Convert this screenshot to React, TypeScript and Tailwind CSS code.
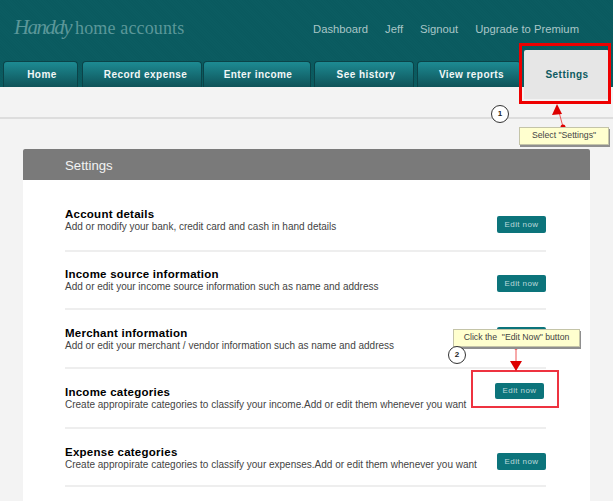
const tabs = [
  { label: "Home", cls: "w-[75px] mr-[4px] pl-[3px]" },
  { label: "Record expense", cls: "w-[120px] mr-[1px] pl-[7px]" },
  { label: "Enter income", cls: "w-[108px] mr-[3px] pl-[2px]" },
  { label: "See history", cls: "w-[100px] mr-[3px] pl-[4px]" },
  { label: "View reports", cls: "w-[104px] mr-[3px] pl-[5px]" },
];

const rows = [
  { title: "Account details", desc: "Add or modify your bank, credit card and cash in hand details", h: "h-[72px]", pt: "pt-[28px]", btn: "mt-[8px] mr-0 h-[17px]" },
  { title: "Income source information", desc: "Add or edit your income source information such as name and address", h: "h-[58px]", pt: "pt-[16px]", btn: "mt-[7px] mr-0 h-[17px]" },
  { title: "Merchant information", desc: "Add or edit your merchant / vendor information such as name and address", h: "h-[59px]", pt: "pt-[17px]", btn: "mt-0 mr-0 h-[17px]" },
  { title: "Income categories", desc: "Create appropirate categories to classify your income.Add or edit them whenever you want", h: "h-[60px]", pt: "pt-[17px]", btn: "-mt-[3px] mr-[2px] h-[16px]" },
  { title: "Expense categories", desc: "Create appropirate categories to classify your expenses.Add or edit them whenever you want", h: "h-[58px]", pt: "pt-[17px]", btn: "mt-[7px] mr-0 h-[17px]" },
];

function Tab({ label, cls }: { label: string; cls: string }) {
  return (
    <div className={`${cls} shrink-0 h-[26px] rounded-t-[4px] border border-b-0 border-[#0b4348] bg-gradient-to-b from-[#1d8b93] to-[#0f5359] flex items-center justify-center text-[#f2f7f7] text-[10px] font-bold tracking-[0.45px] whitespace-nowrap`}>
      {label}
    </div>
  );
}

function Callout({ cls, children }: { cls: string; children: React.ReactNode }) {
  return (
    <div className={`absolute ${cls} bg-[#ffffcf] border border-[#c4c4a8] shadow-[1px_2px_0_#8f8f8f] flex items-center justify-center text-[8.7px] text-[#444] whitespace-nowrap`}>
      {children}
    </div>
  );
}

function Badge({ cls, n }: { cls: string; n: string }) {
  return (
    <div className={`absolute ${cls} w-[18px] h-[18px] rounded-full border-[1.5px] border-[#333] bg-white flex items-center justify-center text-[8px] font-bold text-[#222]`}>
      {n}
    </div>
  );
}

export default function App() {
  return (
    <div className="relative w-[613px] h-[501px] overflow-hidden bg-[#f3f3f3] font-['Liberation_Sans',Arial,sans-serif]">
      <header className="h-[87px] bg-[#0a5b60] bg-[repeating-linear-gradient(45deg,#0a5a5f_0px,#0a5a5f_1px,#0b5c61_1px,#0b5c61_2px)] flex flex-col">
        <div className="h-[61px] flex items-start">
          <div className="ml-[14px] mt-[12px] flex items-baseline text-[#5b9799]">
            <span className="w-[58px] font-['Liberation_Serif',serif] italic text-[21px] leading-[30px] tracking-[-1.6px]">Handdy</span>
            <span className="ml-[3px] font-['Liberation_Serif',serif] text-[18px] leading-[30px] tracking-[0.15px]">home accounts</span>
          </div>
          <nav className="ml-auto mr-[34px] mt-[21px] flex gap-[17px] text-[11.25px] leading-[16px] text-[#a9c6c7]">
            <span>Dashboard</span>
            <span>Jeff</span>
            <span>Signout</span>
            <span>Upgrade to Premium</span>
          </nav>
        </div>
        <div className="h-[26px] pl-[3px] flex items-end">
          {tabs.map((t) => (
            <Tab key={t.label} label={t.label} cls={t.cls} />
          ))}
        </div>
      </header>

      <div className="mt-[30px] h-[2px] bg-[#dddddd]" />

      <main className="mx-[23px] mt-[30px] w-[567px] h-[352px] bg-white">
        <div className="h-[31px] rounded-t-[2px] bg-[#7a7a7a] pl-[42px] pt-[2px] flex items-center text-[13.2px] text-[#f2f2f2]">Settings</div>
        <div className="ml-[42px] w-[481px]">
          {rows.map((r) => (
            <div key={r.title} className={`${r.h} ${r.pt} flex justify-between border-b-2 border-[#eeeeee]`}>
              <div className="whitespace-nowrap">
                <div className="text-[11.5px] leading-[13px] font-bold tracking-[0.25px] text-black">{r.title}</div>
                <div className="text-[10px] leading-[11px] text-[#444]">{r.desc}</div>
              </div>
              <div className={`${r.btn} w-[49px] shrink-0 rounded-[2px] bg-[#0c747b] flex items-center justify-center text-[8px] tracking-[0.4px] text-[#bcdadc]`}>
                Edit now
              </div>
            </div>
          ))}
        </div>
      </main>

      {/* annotations */}
      <div className="absolute left-[524px] top-[50px] w-[85px] h-[49px] rounded-t-[2px] bg-[#e6e6e6] flex items-center justify-center text-[#0d5a60] text-[10px] font-bold tracking-[0.45px] pl-[1px]">
        Settings
      </div>
      <div className="absolute left-[519px] top-[43px] w-[92px] h-[61px] border-[3px] border-[#ee0000]" />
      <div className="absolute left-[471px] top-[370px] w-[88px] h-[38px] border-2 border-[#ee3340]" />
      <svg className="absolute left-0 top-0" width="613" height="501" viewBox="0 0 613 501">
        <line x1="563" y1="127" x2="559" y2="112" stroke="#ee5555" strokeWidth="1" />
        <polygon points="557,104 552,115 562,114" fill="#dd0000" />
        <circle cx="563" cy="127" r="2.5" fill="#dd0000" />
        <line x1="516" y1="347" x2="516" y2="362" stroke="#ee5555" strokeWidth="1" />
        <polygon points="516,371 510,361 522,361" fill="#dd0000" />
        <circle cx="516" cy="347" r="2.5" fill="#dd0000" />
      </svg>
      <Callout cls="left-[519px] top-[127px] w-[90px] h-[18px]">Select "Settings"</Callout>
      <Callout cls="left-[453px] top-[329px] w-[127px] h-[18px]">Click the &nbsp;"Edit Now" button</Callout>
      <Badge cls="left-[491px] top-[105px]" n="1" />
      <Badge cls="left-[448px] top-[346px]" n="2" />
    </div>
  );
}
